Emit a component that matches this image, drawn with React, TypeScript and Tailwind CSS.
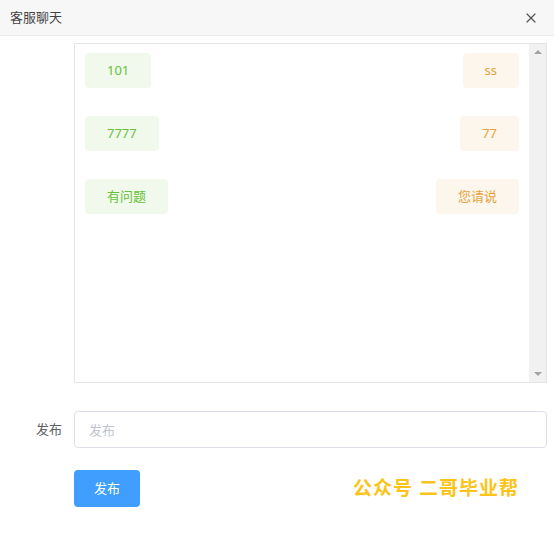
import { X } from 'lucide-react';

const messages = [
  { left: '101', right: 'ss' },
  { left: '7777', right: '77' },
  { left: '有问题', right: '您请说' },
];

export default function App() {
  return (
    <div
      className="w-[554px] h-[542px] bg-white text-[13px] text-[#303133]"
      style={{ fontFamily: '"Noto Sans", "Noto Sans CJK SC", sans-serif' }}
    >
      {/* 标题栏 */}
      <div className="h-[36px] flex items-center justify-between pl-[10px] pr-[15px] bg-[#f7f7f7] border-b border-[#ececec]">
        <span className="text-[13px] text-[#444]">客服聊天</span>
        <X className="w-[16px] h-[16px] text-[#555]" strokeWidth={1.8} />
      </div>

      <div className="pr-[7px]">
        {/* 聊天记录 */}
        <div className="ml-[74px] mt-[7px] h-[340px] border border-[#e4e4e4] flex">
          <div className="flex-1 pt-[9px] pl-[10px] pr-[10px]">
            {messages.map((m, i) => (
              <div key={i} className="flex justify-between mb-[28px]">
                <div className="h-[35px] px-[22px] flex items-center rounded-[4px] bg-[#f0f9eb] text-[#67c23a]">
                  {m.left}
                </div>
                <div className="h-[35px] px-[22px] flex items-center rounded-[4px] bg-[#fdf6ec] text-[#e6a23c]">
                  {m.right}
                </div>
              </div>
            ))}
          </div>
          {/* 滚动条 */}
          <div className="w-[17px] bg-[#f1f1f1] flex flex-col items-center justify-between py-[6px]">
            <div className="w-0 h-0 border-l-[4px] border-r-[4px] border-b-[4px] border-l-transparent border-r-transparent border-b-[#a3a3a3]" />
            <div className="w-0 h-0 border-l-[4px] border-r-[4px] border-t-[4px] border-l-transparent border-r-transparent border-t-[#a3a3a3]" />
          </div>
        </div>

        {/* 输入 */}
        <div className="flex items-center mt-[28px]">
          <label className="w-[74px] pr-[12px] text-right text-[13px] text-[#606266]">发布</label>
          <input
            className="flex-1 h-[37px] px-[14px] border border-[#dcdfe6] rounded-[4px] text-[13px] outline-none placeholder:text-[#c0c4cc]"
            placeholder="发布"
          />
        </div>

        {/* 按钮 */}
        <div className="flex items-center justify-between mt-[22px] pl-[74px] pr-[28px]">
          <button className="w-[66px] h-[37px] rounded-[4px] bg-[#409eff] text-white text-[13px]">发布</button>
          <span className="text-[19px] font-bold text-[#fcc419] tracking-[1px]">公众号 二哥毕业帮</span>
        </div>
      </div>
    </div>
  );
}
